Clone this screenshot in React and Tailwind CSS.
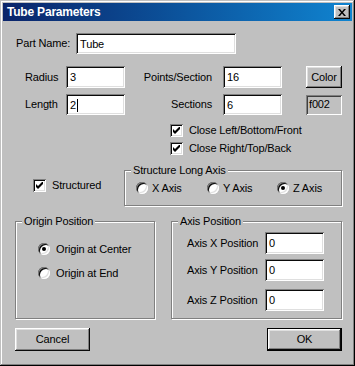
import React from "react";

const sunken =
  "shadow-[inset_1px_1px_#808080,inset_-1px_-1px_#ffffff,inset_2px_2px_#0a0a0a,inset_-2px_-2px_#dfdfdf]";
const raised =
  "shadow-[inset_-1px_-1px_#0a0a0a,inset_1px_1px_#ffffff,inset_-2px_-2px_#808080,inset_2px_2px_#dfdfdf]";

function Field({ value, w = "w-[59px]", h = "h-[22px]", cursor }) {
  return (
    <div className={`${w} ${h} bg-white ${sunken} flex items-center pl-[4px] pt-[1px]`}>
      <span>{value}</span>
      {cursor && <span className="w-px h-[13px] bg-black ml-[1px]" />}
    </div>
  );
}

function Check({ label }) {
  return (
    <div className="flex items-center h-[13px]">
      <div className={`w-[13px] h-[13px] bg-white ${sunken} flex items-center justify-center`}>
        <svg width="7" height="7" viewBox="0 0 7 7">
          <path d="M0 2 L2 4 L7 -1 L7 2 L2 7 L0 5 Z" fill="#000" />
        </svg>
      </div>
      <span className="ml-[6px]">{label}</span>
    </div>
  );
}

function Radio({ label, checked, gap = "ml-[4px]" }) {
  return (
    <div className="flex items-center h-[12px]">
      <div
        className={`w-[12px] h-[12px] rounded-full bg-white ${sunken} flex items-center justify-center`}
      >
        {checked && <div className="w-[4px] h-[4px] rounded-full bg-black" />}
      </div>
      <span className={gap}>{label}</span>
    </div>
  );
}

function Group({ title, className, children }) {
  return (
    <div
      className={`relative border border-[#808080] shadow-[1px_1px_0_0_#ffffff,inset_1px_1px_0_0_#ffffff] ${className}`}
    >
      <span className="absolute -top-[8px] left-[6px] px-[2px] bg-[#c0c0c0] leading-[14px]">
        {title}
      </span>
      {children}
    </div>
  );
}

function Button({ children, className = "" }) {
  return (
    <div className={`bg-[#c0c0c0] ${raised} flex items-center justify-center ${className}`}>
      {children}
    </div>
  );
}

export default function App() {
  return (
    <div className="w-[355px] h-[366px] bg-[#c0c0c0] p-[3px] shadow-[inset_-1px_-1px_#000000,inset_1px_1px_#c0c0c0,inset_-2px_-2px_#808080,inset_2px_2px_#ffffff] font-['Liberation_Sans',Arial,sans-serif] text-[11px] leading-[13px] tracking-[-0.15px] text-black">
      {/* title bar */}
      <div className="h-[18px] bg-gradient-to-r from-[#0a246a] to-[#1084d0] flex items-center justify-between pl-[4px] pr-[2px]">
        <span className="text-white font-bold text-[12px] tracking-[-0.2px]">Tube Parameters</span>
        <div className={`w-[16px] h-[14px] bg-[#c0c0c0] ${raised} flex items-center justify-center`}>
          <svg width="8" height="7" viewBox="0 0 8 7">
            <path d="M0 0h2l2 2.4L6 0h2L5 3.5 8 7H6L4 4.6 2 7H0l3-3.5z" fill="#000" />
          </svg>
        </div>
      </div>

      {/* part name */}
      <div className="mt-[12px] flex items-center h-[21px]">
        <span className="ml-[13px] w-[60px]">Part Name:</span>
        <Field value="Tube" w="w-[160px]" h="h-[21px]" />
      </div>

      <div className="mt-[12px] flex items-center h-[22px]">
        <span className="ml-[22px] w-[41px]">Radius</span>
        <Field value="3" />
        <span className="w-[98px] text-right pr-[11px]">Points/Section</span>
        <Field value="16" />
        <Button className="ml-[24px] w-[36px] h-[22px]">Color</Button>
      </div>

      <div className="mt-[6px] flex items-center h-[21px]">
        <span className="ml-[22px] w-[41px]">Length</span>
        <Field value="2" h="h-[21px]" cursor />
        <span className="w-[98px] text-right pr-[11px]">Sections</span>
        <Field value="6" h="h-[21px]" />
        <div
          className={`ml-[24px] w-[36px] h-[20px] shadow-[inset_1px_1px_#808080,inset_-1px_-1px_#ffffff,inset_2px_2px_#404040] flex items-center pl-[3px]`}
        >
          f002
        </div>
      </div>

      <div className="mt-[9px] ml-[167px]">
        <Check label="Close Left/Bottom/Front" />
      </div>
      <div className="mt-[5px] ml-[167px]">
        <Check label="Close Right/Top/Back" />
      </div>

      <div className="mt-[15px] flex">
        <div className="w-[121px] pl-[30px] pt-[9px]">
          <Check label="Structured" />
        </div>
        <Group title="Structure Long Axis" className="w-[218px] h-[36px]">
          <div className="flex pt-[11px] pl-[11px]">
            <div className="w-[71px]">
              <Radio label="X Axis" />
            </div>
            <div className="w-[70px]">
              <Radio label="Y Axis" />
            </div>
            <Radio label="Z Axis" checked />
          </div>
        </Group>
      </div>

      <div className="mt-[15px] flex">
        <Group title="Origin Position" className="ml-[12px] w-[140px] h-[98px]">
          <div className="pt-[21px] pl-[22px] flex flex-col gap-[12px]">
            <Radio label="Origin at Center" checked gap="ml-[6px]" />
            <Radio label="Origin at End" gap="ml-[6px]" />
          </div>
        </Group>
        <Group title="Axis Position" className="ml-[16px] w-[171px] h-[98px]">
          <div className="pt-[10px]">
            <div className="flex items-center">
              <span className="ml-[15px] w-[78px]">Axis X Position</span>
              <Field value="0" />
            </div>
            <div className="flex items-center mt-[5px]">
              <span className="ml-[15px] w-[78px]">Axis Y Position</span>
              <Field value="0" />
            </div>
            <div className="flex items-center mt-[8px]">
              <span className="ml-[15px] w-[78px]">Axis Z Position</span>
              <Field value="0" />
            </div>
          </div>
        </Group>
      </div>

      <div className="mt-[9px] flex">
        <Button className="ml-[12px] w-[75px] h-[23px]">Cancel</Button>
        <div className="ml-[177px] w-[75px] h-[23px] border border-black">
          <Button className="w-full h-full">OK</Button>
        </div>
      </div>
    </div>
  );
}
